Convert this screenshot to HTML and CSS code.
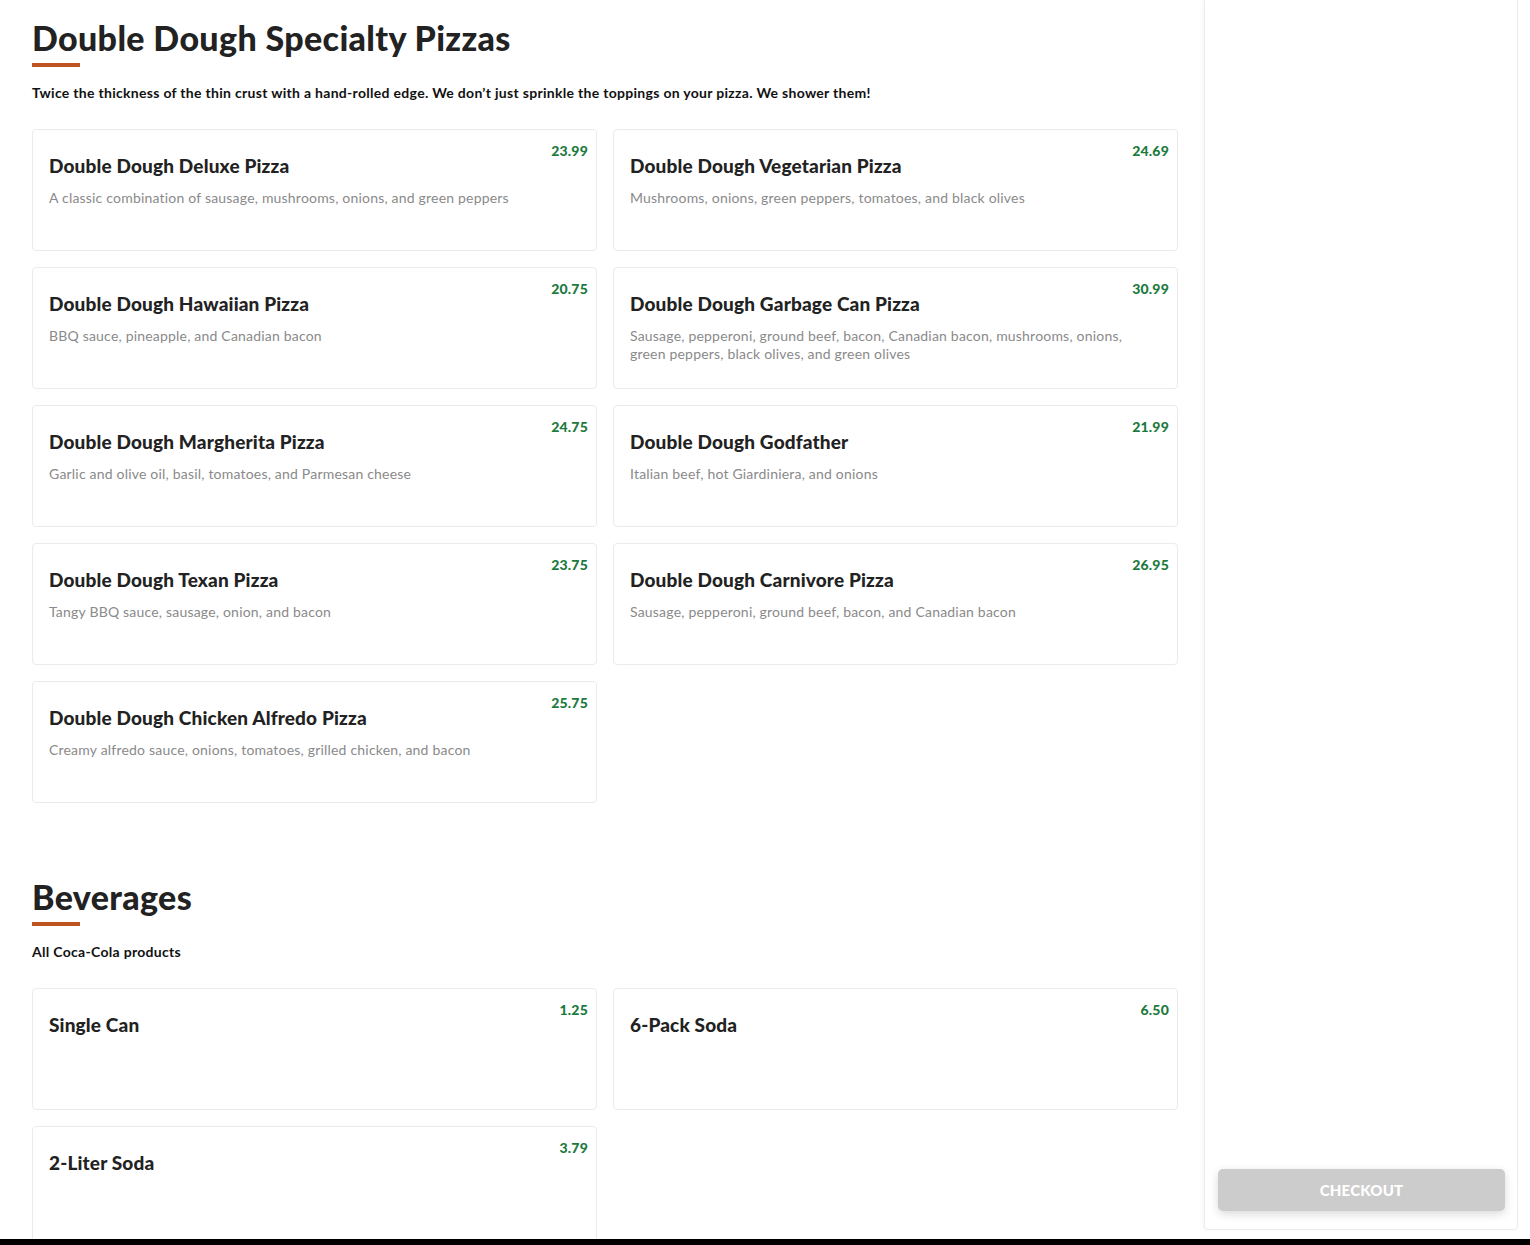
FILE: index.html
```html
<!DOCTYPE html>
<html lang="en">

<head>
    <meta charset="UTF-8">
    <title>Menu</title>
    <link rel="stylesheet" href="styles.css">
</head>

<body>
    <div class="page">
        <main class="menu">
            <section class="category">
                <h1>Double Dough Specialty Pizzas</h1>
                <div class="bar"></div>
                <p class="category-desc">Twice the thickness of the thin crust with a hand-rolled edge. We don’t just sprinkle the toppings on your pizza. We shower them!</p>
                <div class="items">
                    <div class="item">
                        <span class="price">23.99</span>
                        <h3>Double Dough Deluxe Pizza</h3>
                        <p>A classic combination of sausage, mushrooms, onions, and green peppers</p>
                    </div>
                    <div class="item">
                        <span class="price">24.69</span>
                        <h3>Double Dough Vegetarian Pizza</h3>
                        <p>Mushrooms, onions, green peppers, tomatoes, and black olives</p>
                    </div>
                    <div class="item">
                        <span class="price">20.75</span>
                        <h3>Double Dough Hawaiian Pizza</h3>
                        <p>BBQ sauce, pineapple, and Canadian bacon</p>
                    </div>
                    <div class="item">
                        <span class="price">30.99</span>
                        <h3>Double Dough Garbage Can Pizza</h3>
                        <p>Sausage, pepperoni, ground beef, bacon, Canadian bacon, mushrooms, onions, green peppers, black olives, and green olives</p>
                    </div>
                    <div class="item">
                        <span class="price">24.75</span>
                        <h3>Double Dough Margherita Pizza</h3>
                        <p>Garlic and olive oil, basil, tomatoes, and Parmesan cheese</p>
                    </div>
                    <div class="item">
                        <span class="price">21.99</span>
                        <h3>Double Dough Godfather</h3>
                        <p>Italian beef, hot Giardiniera, and onions</p>
                    </div>
                    <div class="item">
                        <span class="price">23.75</span>
                        <h3>Double Dough Texan Pizza</h3>
                        <p>Tangy BBQ sauce, sausage, onion, and bacon</p>
                    </div>
                    <div class="item">
                        <span class="price">26.95</span>
                        <h3>Double Dough Carnivore Pizza</h3>
                        <p>Sausage, pepperoni, ground beef, bacon, and Canadian bacon</p>
                    </div>
                    <div class="item">
                        <span class="price">25.75</span>
                        <h3>Double Dough Chicken Alfredo Pizza</h3>
                        <p>Creamy alfredo sauce, onions, tomatoes, grilled chicken, and bacon</p>
                    </div>
                </div>
            </section>

            <section class="category">
                <h1>Beverages</h1>
                <div class="bar"></div>
                <p class="category-desc">All Coca-Cola products</p>
                <div class="items">
                    <div class="item">
                        <span class="price">1.25</span>
                        <h3>Single Can</h3>
                    </div>
                    <div class="item">
                        <span class="price">6.50</span>
                        <h3>6-Pack Soda</h3>
                    </div>
                    <div class="item">
                        <span class="price">3.79</span>
                        <h3>2-Liter Soda</h3>
                    </div>
                </div>
            </section>
        </main>

        <aside class="cart">
            <button class="checkout" disabled>CHECKOUT</button>
        </aside>
    </div>
    <div class="footer-edge"></div>
</body>

</html>
```

FILE: styles.css
```css
body {
    margin: 0;
    background-color: #ffffff;
    color: #222222;
    font-family: Lato, 'Noto Sans', sans-serif;
    overflow: hidden;
}

.page {
    display: flex;
    align-items: flex-start;
    gap: 26px;
    padding: 0 12px 0 32px;
}

.menu {
    width: 1146px;
    flex-shrink: 0;
}

.category {
    padding-top: 17px;
    margin-bottom: 56px;
}

.category h1 {
    margin: 0;
    font-size: 34px;
    line-height: 42px;
    font-weight: 900;
    letter-spacing: 0.35px;
    color: #222222;
}

.bar {
    width: 48px;
    height: 4px;
    margin-top: 4px;
    background-color: #bf5420;
}

.category-desc {
    margin: 16px 0 26px;
    font-size: 14px;
    line-height: 20px;
    font-weight: 700;
    letter-spacing: 0.3px;
    color: #111111;
}

.items {
    display: grid;
    grid-template-columns: 1fr 1fr;
    gap: 16px;
}

.item {
    position: relative;
    min-height: 122px;
    box-sizing: border-box;
    padding: 23px 16px 16px;
    border: 1px solid #ebebeb;
    border-radius: 4px;
}

.item h3 {
    margin: 0;
    font-size: 19px;
    line-height: 26px;
    font-weight: 900;
    letter-spacing: 0.15px;
    color: #222222;
}

.item p {
    margin: 10px 0 0;
    font-size: 14px;
    line-height: 18px;
    letter-spacing: 0.2px;
    color: #8a8a8a;
    max-width: 510px;
}

.price {
    position: absolute;
    top: 12px;
    right: 8px;
    font-size: 14px;
    line-height: 18px;
    font-weight: 900;
    letter-spacing: 0.2px;
    color: #1c7a3e;
}

.cart {
    width: 314px;
    height: 1230px;
    box-sizing: border-box;
    border: 1px solid #ececec;
    border-top: none;
    border-radius: 0 0 4px 4px;
    box-shadow: -2px 0 3px rgba(0, 0, 0, 0.03);
    display: flex;
    flex-direction: column;
    justify-content: flex-end;
    padding: 0 12px 18px 13px;
}

.checkout {
    height: 42px;
    border: none;
    border-radius: 5px;
    background-color: #cccccc;
    color: #ffffff;
    font-family: inherit;
    font-size: 15px;
    font-weight: 900;
    letter-spacing: 0.2px;
    box-shadow: 0 3px 10px rgba(0, 0, 0, 0.15);
}

.footer-edge {
    position: fixed;
    left: 0;
    right: 0;
    bottom: 0;
    height: 6px;
    background-color: #000000;
}
```
